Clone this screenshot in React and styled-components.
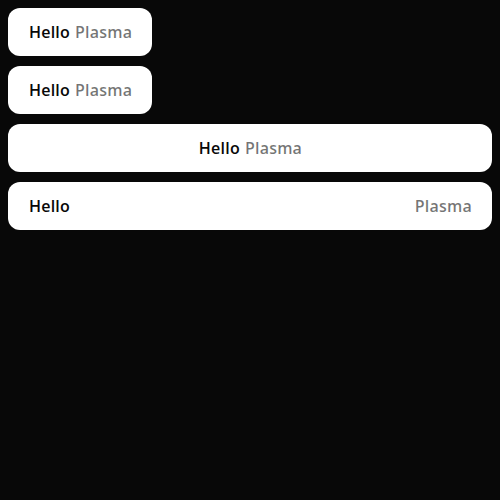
import React from "react";
import styled, { createGlobalStyle } from "styled-components";

const Global = createGlobalStyle`
  html, body { margin: 0; padding: 0; background: #080808; }
  body { font-family: "Open Sans", "Liberation Sans", sans-serif; }
`;

const Page = styled.div`
  padding: 8px;
  display: flex;
  flex-direction: column;
  gap: 10px;
  align-items: flex-start;
`;

const Button = styled.button`
  box-sizing: border-box;
  height: 48px;
  padding: 0 20px 0 21px;
  border: none;
  border-radius: 12px;
  background: #ffffff;
  display: flex;
  align-items: center;
  justify-content: ${(p) => (p.$spread ? "space-between" : "center")};
  gap: 5px;
  width: ${(p) => (p.$stretch ? "100%" : "auto")};
  font-family: "Open Sans", "Liberation Sans", sans-serif;
  font-size: 16px;
  font-weight: 600;
  letter-spacing: 0.22px;
  line-height: 20px;
  cursor: pointer;
`;

const Label = styled.span`
  color: #080808;
`;

const Value = styled.span`
  color: rgba(8, 8, 8, 0.56);
`;

export default function App() {
  return (
    <>
      <Global />
      <Page>
        <Button><Label>Hello</Label><Value>Plasma</Value></Button>
        <Button><Label>Hello</Label><Value>Plasma</Value></Button>
        <Button $stretch><Label>Hello</Label><Value>Plasma</Value></Button>
        <Button $stretch $spread><Label>Hello</Label><Value>Plasma</Value></Button>
      </Page>
    </>
  );
}
